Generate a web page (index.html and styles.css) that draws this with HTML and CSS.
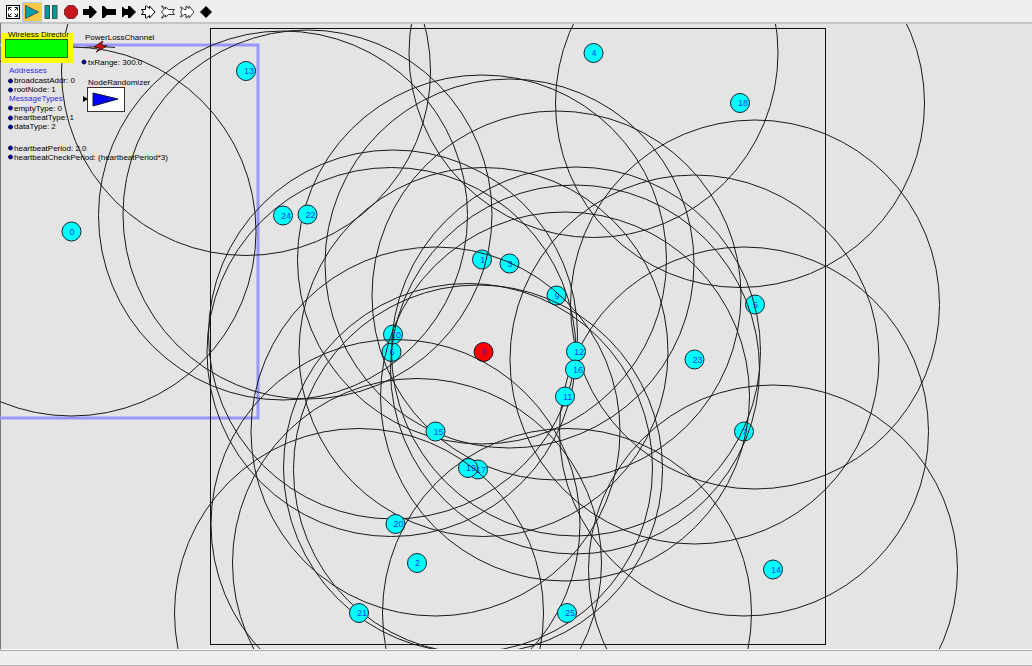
FILE: index.html
```html
<!DOCTYPE html>
<html lang="en">
<head>
<meta charset="utf-8">
<title>Wireless Director</title>
<link rel="stylesheet" href="styles.css">
</head>
<body>
<div class="app">
  <header class="toolbar" role="toolbar" aria-label="Model controls">
    <button class="tool" aria-label="Full screen"><svg class="icon" viewBox="0 0 16 16"><rect x="1.500" y="1.500" width="13" height="13" fill="#fff" stroke="#000"/><path d="M6.500 3.500h-3v3M3.500 3.500l3 3M9.500 3.500h3v3M12.500 3.500l-3 3M3.500 9.500v3h3M3.500 12.500l3-3M12.500 9.500v3h-3M12.500 12.500l-3-3" fill="none" stroke="#222"/></svg></button>
    <button class="tool tool-active" aria-label="Run"><svg class="icon" viewBox="0 0 16 16"><path d="M1.500 1.500v13l13-6.500z" fill="#00a0a0" stroke="#555"/></svg></button>
    <button class="tool" aria-label="Pause"><svg class="icon" viewBox="0 0 16 16"><path d="M2 1.500h4.500v13H2zM9.500 1.500H14v13H9.500z" fill="#009c9c" stroke="#355"/></svg></button>
    <button class="tool" aria-label="Stop"><svg class="icon" viewBox="0 0 16 16"><path d="M5 1.500h6l3.500 4v5l-3.500 4H5l-3.500-4v-5z" fill="#c4161c" stroke="#733"/></svg></button>
    <button class="tool" aria-label="Input port"><svg class="icon" viewBox="0 0 16 16"><path d="M1 5h6V2h2l6 6-6 6H7v-3H1z"/></svg></button>
    <button class="tool" aria-label="Output port"><svg class="icon" viewBox="0 0 16 16"><path d="M1 2h2l3 3h9v6H6l-3 3H1z"/></svg></button>
    <button class="tool" aria-label="Input/output port"><svg class="icon" viewBox="0 0 16 16"><path d="M1 3h1l2 2h3V2h2l6 6-6 6H7v-3H4l-2 2H1z"/></svg></button>
    <button class="tool" aria-label="Input multiport"><svg class="icon" viewBox="0 0 16 16"><path d="M1.500 5.500h4v-3.500h1l3 2.500v-2.500l5.500 6-5.500 6v-2.500l-3 2.500h-1v-3.500h-4l2-2.500z" fill="#fff" stroke="#000"/></svg></button>
    <button class="tool" aria-label="Output multiport"><svg class="icon" viewBox="0 0 16 16"><path d="M1.500 2h1l3 3v-2l3 2.500h6l-2 2.500 2 2.500h-6l-3 2.500v-2l-3 3h-1l2.500-3.500-2.500-2.500 2.500-2.500z" fill="#fff" stroke="#333"/></svg></button>
    <button class="tool" aria-label="Input/output multiport"><svg class="icon" viewBox="0 0 16 16"><path d="M1.500 3h1l2.500 2.500h2v-3.500l3 2.500v-2.500l5 6-5 6v-2.500l-3 2.500v-3.500h-2l-2.500 2.500h-1l1.500-3-1.500-2 1.500-2z" fill="#fff" stroke="#333"/></svg></button>
    <button class="tool" aria-label="New relation"><svg class="icon" viewBox="0 0 16 16"><path d="M8 2l6 6-6 6-6-6z"/></svg></button>
  </header>

  <main class="canvas">
    <svg class="graph" role="img" aria-label="Wireless sensor network model">
      <g transform="translate(0 -24)">
        <path class="bounds" d="M-3 45H258V418H-3z"/>
        <rect class="field" x="210.500" y="28.500" width="615" height="616"/>

        <g id="nodes"></g>

        <rect x="1" y="33" width="72" height="30" fill="#ff0"/>
        <rect x="5.500" y="39.500" width="62" height="18" fill="#0f0" stroke="#262"/>
        <text class="caption" x="8" y="37">Wireless Director</text>

        <path d="M84 47.500l14-1M101 46.500l14 1" stroke="#222"/>
        <path d="M103 41l-9 6 6 1-4 4 11-6-6-1z" fill="#e01010" stroke="#411"/>
        <text class="caption" x="85" y="40">PowerLossChannel</text>
        <g class="param"><circle cx="84" cy="62" r="2"/><text x="88" y="65">txRange: 300.0</text></g>

        <text class="caption" x="88" y="85">NodeRandomizer</text>
        <rect x="87.500" y="87.500" width="37" height="24" fill="#fff" stroke="#333"/>
        <path d="M93 93v13l25-7z" fill="#00f" stroke="#113"/>
        <path d="M83 96v6l5-3z"/>

        <text class="heading" x="9" y="73">Addresses</text>
        <g class="param"><circle cx="10.500" cy="81" r="2"/><text x="14" y="83">broadcastAddr: 0</text></g>
        <g class="param"><circle cx="10.500" cy="90" r="2"/><text x="14" y="92">rootNode: 1</text></g>
        <text class="heading" x="9" y="101">MessageTypes</text>
        <g class="param"><circle cx="10.500" cy="108" r="2"/><text x="14" y="111">emptyType: 0</text></g>
        <g class="param"><circle cx="10.500" cy="118" r="2"/><text x="14" y="120">heartbeatType: 1</text></g>
        <g class="param"><circle cx="10.500" cy="127" r="2"/><text x="14" y="129">dataType: 2</text></g>
        <g class="param"><circle cx="10.500" cy="148" r="2"/><text x="14" y="151">heartbeatPeriod: 2.0</text></g>
        <g class="param"><circle cx="10.500" cy="157" r="2"/><text x="14" y="160">heartbeatCheckPeriod: (heartbeatPeriod*3)</text></g>
      </g>
    </svg>
  </main>
  <footer class="statusbar" role="status"></footer>
</div>
<script src="nodes.js"></script>
</body>
</html>
```
FILE: styles.css
```css
* {
  box-sizing: border-box;
}

body {
  margin: 0;
  background: #efefef;
  font-family: "Liberation Sans", Arial, sans-serif;
}

.app {
  display: flex;
  flex-direction: column;
  height: 100vh;
}

.toolbar {
  display: grid;
  grid-template-columns: repeat(11, 1fr);
  width: 216px;
  height: 22px;
  padding: 2px 0 0 3px;
}

.tool {
  display: flex;
  align-items: center;
  justify-content: center;
  padding: 0;
  border: 1px solid transparent;
  background: transparent;
}

.tool-active {
  border: 1px solid #a9cdf0;
  background: #ffc84a;
}

.icon {
  flex: none;
  width: 16px;
  height: 16px;
}

.canvas {
  flex: 1;
  min-height: 0;
  border-top: 2px solid #c4c4c4;
  border-left: 1px solid #777;
  border-bottom: 1px solid #fff;
  background: #e4e4e4;
}

.graph {
  display: block;
  width: calc(100% + 1px);
  height: 100%;
  margin-left: -1px;
  overflow: hidden;
}

.bounds {
  fill: none;
  stroke: #9696ff;
  stroke-width: 3px;
}

.field {
  fill: none;
  stroke: #111;
}

.caption,
.param,
.heading {
  font-size: 8px;
}

.heading {
  fill: #2a2ae0;
}

.param circle {
  fill: #0000c8;
  stroke: #113;
}

.range {
  fill: none;
  stroke: #1a1a1a;
}

.node {
  fill: #0ff;
  stroke: #123;
}

.node-root {
  fill: #f00;
}

.label {
  fill: #0040ff;
  font-size: 9px;
}

.node-root + .label {
  fill: #5a10a0;
}

.statusbar {
  height: 16px;
  border-top: 1px solid #aaa;
  border-bottom: 1px solid #bbb;
  background: #efefef;
}
```
FILE: nodes.js
```js
// Node centres, indexed by node number.
const nodes = [
  [71.5, 231.5], [482, 259.5], [417, 563], [509.5, 263.5], [593.5, 53],
  [755, 304.5], [391.5, 352], [744, 431.5], [483.5, 352], [556.5, 295.5],
  [393, 334.5], [565, 396.5], [576, 351.5], [246, 71], [773, 569.5],
  [435.5, 431.5], [575, 369.5], [478, 469.5], [740, 103], [468, 468],
  [395.5, 524], [359, 613], [307.5, 214.5], [694.5, 359.5],
  [283, 215.5], [567, 613]
];
const RANGE = 184.5;
const ROOT = 8;

document.getElementById("nodes").innerHTML = nodes.map(([x, y], i) => `
  <circle class="range" cx="${x}" cy="${y}" r="${RANGE}"/>
  <circle class="node${i === ROOT ? " node-root" : ""}" cx="${x}" cy="${y}" r="9.5"/>
  <text class="label" x="${x - 2}" y="${y + 3}">${i}</text>`).join("");
```
